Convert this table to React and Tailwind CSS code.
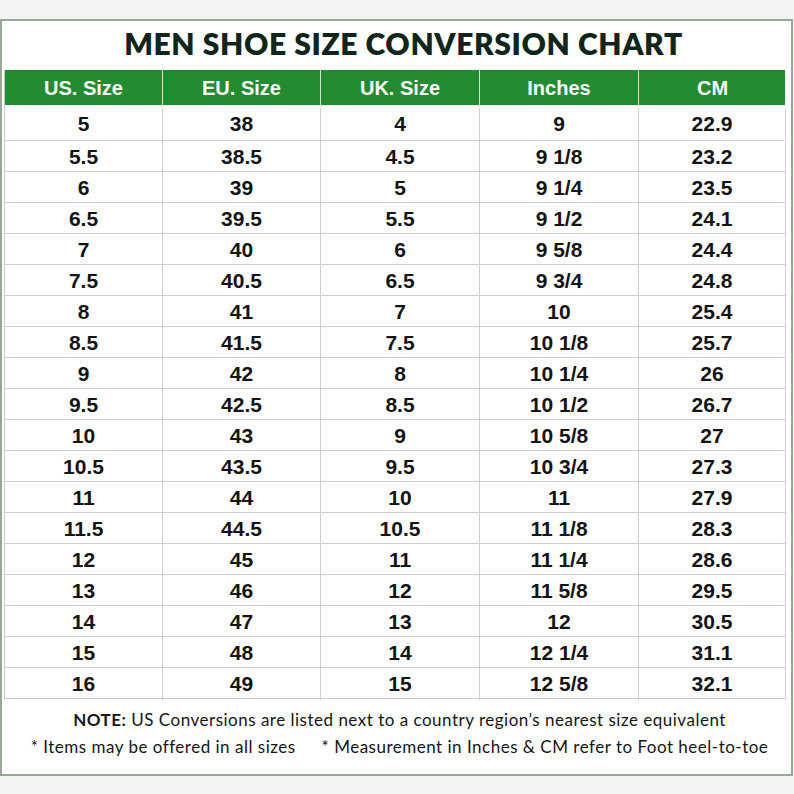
import React from 'react';

const rows = [
    ['5', '38', '4', '9', '22.9'],
    ['5.5', '38.5', '4.5', '9 1/8', '23.2'],
    ['6', '39', '5', '9 1/4', '23.5'],
    ['6.5', '39.5', '5.5', '9 1/2', '24.1'],
    ['7', '40', '6', '9 5/8', '24.4'],
    ['7.5', '40.5', '6.5', '9 3/4', '24.8'],
    ['8', '41', '7', '10', '25.4'],
    ['8.5', '41.5', '7.5', '10 1/8', '25.7'],
    ['9', '42', '8', '10 1/4', '26'],
    ['9.5', '42.5', '8.5', '10 1/2', '26.7'],
    ['10', '43', '9', '10 5/8', '27'],
    ['10.5', '43.5', '9.5', '10 3/4', '27.3'],
    ['11', '44', '10', '11', '27.9'],
    ['11.5', '44.5', '10.5', '11 1/8', '28.3'],
    ['12', '45', '11', '11 1/4', '28.6'],
    ['13', '46', '12', '11 5/8', '29.5'],
    ['14', '47', '13', '12', '30.5'],
    ['15', '48', '14', '12 1/4', '31.1'],
    ['16', '49', '15', '12 5/8', '32.1'],
];

const headers = ['US. Size', 'EU. Size', 'UK. Size', 'Inches', 'CM'];

const gridCols = 'grid grid-cols-[158px_158px_159px_159px_147px]';

const App = () => {
    return (
        <div className="w-[794px] h-[794px] bg-[#f3f3f3] pt-[19px]">
            <div className="w-[793px] h-[757px] bg-white border-2 border-[#97a897] pl-[2px] pr-[6px] flex flex-col">
                <h1 className="h-[49px] pb-[5px] pl-[18px] flex items-center justify-center text-[30px] font-extrabold text-[#10261a] tracking-[0.6px] font-['Lato','Open_Sans',sans-serif]">
                    MEN SHOE SIZE CONVERSION CHART
                </h1>

                <div className="font-['Liberation_Sans',Arial,sans-serif] border-b border-l border-[#c9c9c9]">
                    <div className={`${gridCols} bg-[#238b30] h-[35px]`}>
                        {headers.map((h, i) => (
                            <div
                                key={h}
                                className={`flex items-center justify-center text-white font-bold text-[20px] ${i < 4 ? 'border-r border-[#cfe3cf]' : ''}`}
                            >
                                {h}
                            </div>
                        ))}
                    </div>
                    {rows.map((r, ri) => (
                        <div
                            key={ri}
                            className={`${gridCols} ${ri === 0 ? 'h-[35px] pt-[3px]' : 'h-[31px] border-t border-[#cfcfcf]'}`}
                        >
                            {r.map((c, ci) => (
                                <div
                                    key={ci}
                                    className="flex items-center justify-center border-r border-[#cfcfcf] text-[21px] font-bold text-[#141414]"
                                >
                                    {c}
                                </div>
                            ))}
                        </div>
                    ))}
                </div>

                <div className="flex-1 flex flex-col items-center pt-[7px] pl-[10px] text-[17px] tracking-[0.5px] text-[#151515] font-['Lato','Open_Sans',sans-serif] leading-[27px]">
                    <p>
                        <span className="font-bold">NOTE:</span> US Conversions are listed next to a country region’s nearest size equivalent
                    </p>
                    <p className="flex gap-[26px]">
                        <span>* Items may be offered in all sizes</span>
                        <span>* Measurement in Inches &amp; CM refer to Foot heel-to-toe</span>
                    </p>
                </div>
            </div>
        </div>
    );
};

export default App;
